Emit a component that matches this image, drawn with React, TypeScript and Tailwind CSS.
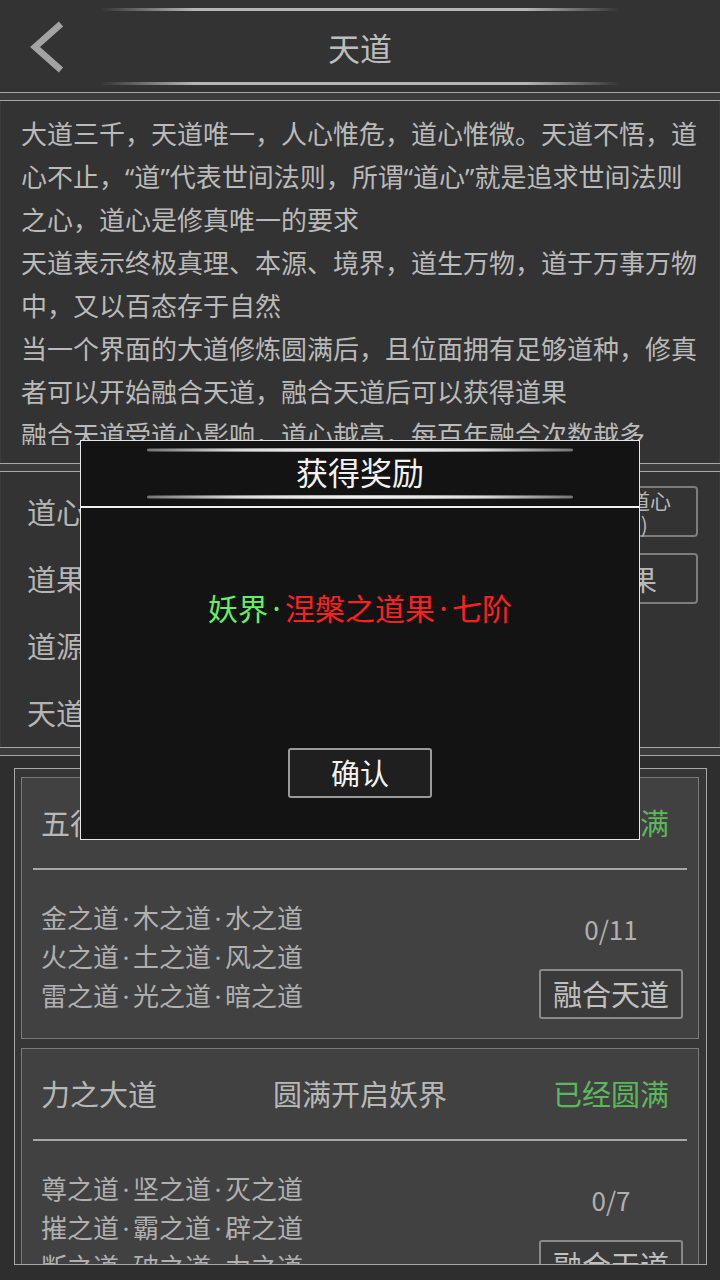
import React from "react";

function DoubleLine() {
  return <div className="h-[9px] shrink-0 border-y border-[#a8a8a8] bg-[#3c3c3c]" />;
}

function GlowLine({ color = "#b5b5b5" }: { color?: string }) {
  return (
    <div
      className="mx-auto h-[3px] w-[520px] rounded-full"
      style={{ background: `linear-gradient(to right, transparent 0%, ${color} 18%, ${color} 82%, transparent 100%)` }}
    />
  );
}

function ModalLine() {
  return (
    <div
      className="mx-auto h-[4px] w-[426px] rounded-full"
      style={{ background: "radial-gradient(ellipse at center, #ffffff 0%, #d8d8d8 45%, rgba(140,140,140,0.6) 80%, transparent 100%)" }}
    />
  );
}

// Render text with narrow middle dots and quotes
function Rich({ text, dotW = "w-[14px]" }: { text: string; dotW?: string }) {
  const parts: React.ReactNode[] = [];
  let buf = "";
  let k = 0;
  const flush = () => {
    if (buf) {
      parts.push(<React.Fragment key={k++}>{buf}</React.Fragment>);
      buf = "";
    }
  };
  for (const ch of text) {
    if (ch === "·") {
      flush();
      parts.push(
        <span key={k++} className={`inline-flex justify-center leading-none font-['Noto_Sans',sans-serif] ${dotW}`}>
          ·
        </span>
      );
    } else if (ch === "“" || ch === "”") {
      flush();
      parts.push(
        <span key={k++} className="inline-block leading-none font-['Noto_Sans',sans-serif]">
          {ch}
        </span>
      );
    } else {
      buf += ch;
    }
  }
  flush();
  return <>{parts}</>;
}

const paragraph = [
  "大道三千，天道唯一，人心惟危，道心惟微。天道不悟，道",
  "心不止，“道”代表世间法则，所谓“道心”就是追求世间法则",
  "之心，道心是修真唯一的要求",
  "天道表示终极真理、本源、境界，道生万物，道于万事万物",
  "中，又以百态存于自然",
  "当一个界面的大道修炼圆满后，且位面拥有足够道种，修真",
  "者可以开始融合天道，融合天道后可以获得道果",
  "融合天道受道心影响，道心越高，每百年融合次数越多",
];

type Card = { name: string; unlock: string; status: string; items: string[]; count: string };

const cards: Card[] = [
  {
    name: "五行大道",
    unlock: "圆满开启人界",
    status: "已经圆满",
    items: ["金之道·木之道·水之道", "火之道·土之道·风之道", "雷之道·光之道·暗之道"],
    count: "0/11",
  },
  {
    name: "力之大道",
    unlock: "圆满开启妖界",
    status: "已经圆满",
    items: ["尊之道·坚之道·灭之道", "摧之道·霸之道·辟之道", "断之道·破之道·力之道"],
    count: "0/7",
  },
];

function DaoCard({ c }: { c: Card }) {
  return (
    <div className="shrink-0 border border-[#7a7a7a] bg-[#414141]">
      <div className="grid h-[90px] grid-cols-3 items-center text-[29px]">
        <div className="pl-[19px] text-[#b8b8b8]">{c.name}</div>
        <div className="text-center text-[#b8b8b8]">{c.unlock}</div>
        <div className="pr-[29px] text-right text-[#5cb85c]">{c.status}</div>
      </div>
      <div className="mx-[11px] h-[2px] bg-[#a8a8a8]" />
      <div className="flex h-[168px] justify-between">
        <div className="pl-[19px] pt-[27px] text-[26px] leading-[39px] text-[#b0b0b0]">
          {c.items.map((t) => (
            <div key={t} className="whitespace-nowrap">
              <Rich text={t} />
            </div>
          ))}
        </div>
        <div className="flex flex-col items-center pr-[15px] pt-[41px]">
          <div className="text-[26px] leading-[36px] text-[#b0b0b0]">{c.count}</div>
          <div className="mt-[22px] flex h-[50px] w-[144px] items-center justify-center rounded-[3px] border-2 border-[#8a8a8a] bg-[#3a3a3a] text-[29px] text-[#c0c0c0]">
            融合天道
          </div>
        </div>
      </div>
    </div>
  );
}

export default function App() {
  return (
    <div className="relative flex h-[1280px] w-[720px] flex-col overflow-hidden bg-[#2e2e2e] font-['Noto_Sans_CJK_SC','Noto_Sans',sans-serif]">
      {/* Header */}
      <div className="flex h-[92px] shrink-0 flex-col bg-[#333333] pt-[8px]">
        <GlowLine />
        <div className="grid flex-1 grid-cols-[1fr_auto_1fr] items-center">
          <div className="pl-[26px]">
            <svg width="44" height="56" viewBox="0 0 44 56">
              <polyline points="35,5 9,28 35,51" fill="none" stroke="#a3a3a3" strokeWidth="6.5" strokeLinejoin="miter" />
            </svg>
          </div>
          <div className="text-[32px] text-[#bdbdbd]">天道</div>
          <div />
        </div>
        <GlowLine />
        <div className="h-[7px]" />
      </div>
      <DoubleLine />

      {/* Paragraph */}
      <div className="h-[362px] shrink-0 border-x border-[#3d3d3d] bg-[#333333] pl-[20px] pt-[10px]">
        <div className="h-[334px] overflow-hidden text-[26px] leading-[43px] text-[#bababa]">
          {paragraph.map((l) => (
            <div key={l} className="whitespace-nowrap">
              <Rich text={l} />
            </div>
          ))}
        </div>
      </div>
      <DoubleLine />

      {/* Stats */}
      <div className="h-[275px] shrink-0 border-x border-[#3d3d3d] bg-[#333333] pt-[6px] text-[29px] text-[#b5b5b5]">
        <div className="flex h-[67px] items-center justify-between pl-[26px] pr-[21px]">
          <span>道心：0</span>
          <div className="flex h-[51px] w-[138px] flex-col items-center justify-center rounded-[4px] border-2 border-[#7d7d7d] text-[21px] leading-[24px] text-[#b8b8b8]">
            <span>提升道心</span>
            <span>(10)</span>
          </div>
        </div>
        <div className="flex h-[67px] items-center justify-between pl-[26px] pr-[21px]">
          <span>道果：0</span>
          <div className="flex h-[51px] w-[194px] items-center justify-center rounded-[4px] border-2 border-[#7d7d7d] text-[28px] text-[#b8b8b8]">
            查看道果
          </div>
        </div>
        <div className="flex h-[67px] items-center pl-[26px]">
          <span>道源：0</span>
        </div>
        <div className="flex h-[67px] items-center pl-[26px]">
          <span>天道：0</span>
        </div>
      </div>
      <DoubleLine />

      {/* Bottom list */}
      <div className="flex-1 pl-[14px] pr-[13px] pt-[12px]">
        <div className="flex h-[497px] flex-col gap-[9px] overflow-hidden border border-[#a8a8a8] bg-[#363636] pl-[6px] pr-[7px] pt-[8px]">
          {cards.map((c) => (
            <DaoCard key={c.name} c={c} />
          ))}
        </div>
      </div>

      {/* Modal */}
      <div className="absolute left-[80px] top-[440px] flex h-[400px] w-[560px] flex-col border border-[#e6e6e6] bg-[#131313]">
        <div className="flex h-[65px] flex-col pt-[7px]">
          <ModalLine />
          <div className="flex flex-1 items-center justify-center pb-[5px] text-[32px] leading-none text-[#f2f2f2]">获得奖励</div>
          <ModalLine />
          <div className="h-[7px]" />
        </div>
        <div className="h-[2px] bg-[#f0f0f0]" />
        <div className="flex flex-1 flex-col items-center pt-[79px]">
          <div className="whitespace-nowrap text-[30px] leading-[40px]">
            <span className="text-[#66f066]">
              <Rich text="妖界·" dotW="w-[17px]" />
            </span>
            <span className="text-[#ff2020]">
              <Rich text="涅槃之道果·七阶" dotW="w-[17px]" />
            </span>
          </div>
          <div className="mt-[121px] flex h-[50px] w-[144px] items-center justify-center rounded-[3px] border-2 border-[#9a9a9a] bg-[#1f1f1f] text-[29px] text-[#f2f2f2]">
            确认
          </div>
        </div>
      </div>
    </div>
  );
}
